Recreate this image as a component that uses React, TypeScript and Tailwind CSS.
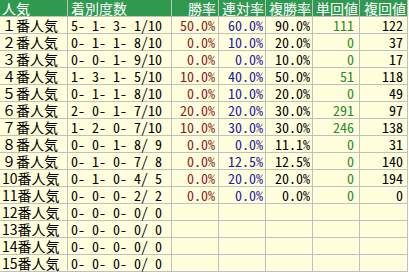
import React from "react";

type Row = {
  label: string;
  counts: string;
  win: string;
  ren: string;
  fuku: string;
  tan: string;
  fukuVal: string;
};

const rows: Row[] = [
  { label: "１番人気", counts: "5- 1- 3- 1/10", win: "50.0%", ren: "60.0%", fuku: "90.0%", tan: "111", fukuVal: "122" },
  { label: "２番人気", counts: "0- 1- 1- 8/10", win: "0.0%", ren: "10.0%", fuku: "20.0%", tan: "0", fukuVal: "37" },
  { label: "３番人気", counts: "0- 0- 1- 9/10", win: "0.0%", ren: "0.0%", fuku: "10.0%", tan: "0", fukuVal: "17" },
  { label: "４番人気", counts: "1- 3- 1- 5/10", win: "10.0%", ren: "40.0%", fuku: "50.0%", tan: "51", fukuVal: "118" },
  { label: "５番人気", counts: "0- 1- 1- 8/10", win: "0.0%", ren: "10.0%", fuku: "20.0%", tan: "0", fukuVal: "49" },
  { label: "６番人気", counts: "2- 0- 1- 7/10", win: "20.0%", ren: "20.0%", fuku: "30.0%", tan: "291", fukuVal: "97" },
  { label: "７番人気", counts: "1- 2- 0- 7/10", win: "10.0%", ren: "30.0%", fuku: "30.0%", tan: "246", fukuVal: "138" },
  { label: "８番人気", counts: "0- 0- 1- 8/ 9", win: "0.0%", ren: "0.0%", fuku: "11.1%", tan: "0", fukuVal: "31" },
  { label: "９番人気", counts: "0- 1- 0- 7/ 8", win: "0.0%", ren: "12.5%", fuku: "12.5%", tan: "0", fukuVal: "140" },
  { label: "10番人気", counts: "0- 1- 0- 4/ 5", win: "0.0%", ren: "20.0%", fuku: "20.0%", tan: "0", fukuVal: "194" },
  { label: "11番人気", counts: "0- 0- 0- 2/ 2", win: "0.0%", ren: "0.0%", fuku: "0.0%", tan: "0", fukuVal: "0" },
  { label: "12番人気", counts: "0- 0- 0- 0/ 0", win: "", ren: "", fuku: "", tan: "", fukuVal: "" },
  { label: "13番人気", counts: "0- 0- 0- 0/ 0", win: "", ren: "", fuku: "", tan: "", fukuVal: "" },
  { label: "14番人気", counts: "0- 0- 0- 0/ 0", win: "", ren: "", fuku: "", tan: "", fukuVal: "" },
  { label: "15番人気", counts: "0- 0- 0- 0/ 0", win: "", ren: "", fuku: "", tan: "", fukuVal: "" },
];

// MS Gothic look: half-width forms for the numbers
const cell = "h-[17px] border-r border-b border-[#c0c0c0] leading-[16px] whitespace-pre";
const num = "[font-feature-settings:'hwid']";
const head = `${cell} bg-[#2f9a4f] text-white`;
const body = `${cell} bg-[#ffffdd]`;

export default function App() {
  return (
    <div className="w-[409px] h-[275px] bg-white">
      <div className="grid grid-cols-[68px_104px_47px_47px_47px_47px_48px] w-[408px] text-[14px] text-black [font-family:'Noto_Sans_CJK_JP',sans-serif]">
        <div className={`${head} pl-[2px]`}>人気</div>
        <div className={`${head} pl-[3px]`}>着別度数</div>
        <div className={`${head} text-right pr-[2px]`}>勝率</div>
        <div className={`${head} text-right pr-[1px]`}>連対率</div>
        <div className={`${head} text-right pr-[1px]`}>複勝率</div>
        <div className={`${head} text-right pr-[1px]`}>単回値</div>
        <div className={`${head} text-right pr-[1px]`}>複回値</div>

        {rows.map((r) => (
          <React.Fragment key={r.label}>
            <div className={`${body} pl-[2px]`}>{r.label}</div>
            <div className={`${body} ${num} pl-[3px]`}>{r.counts}</div>
            <div className={`${body} ${num} text-right pr-[3px] text-[#8b1a1a]`}>{r.win}</div>
            <div className={`${body} ${num} text-right pr-[2px] text-[#2020a0]`}>{r.ren}</div>
            <div className={`${body} ${num} text-right pr-[2px]`}>{r.fuku}</div>
            <div className={`${body} ${num} text-right pr-[5px] text-[#2a8a2a]`}>{r.tan}</div>
            <div className={`${body} ${num} text-right pr-[4px]`}>{r.fukuVal}</div>
          </React.Fragment>
        ))}
      </div>
    </div>
  );
}
